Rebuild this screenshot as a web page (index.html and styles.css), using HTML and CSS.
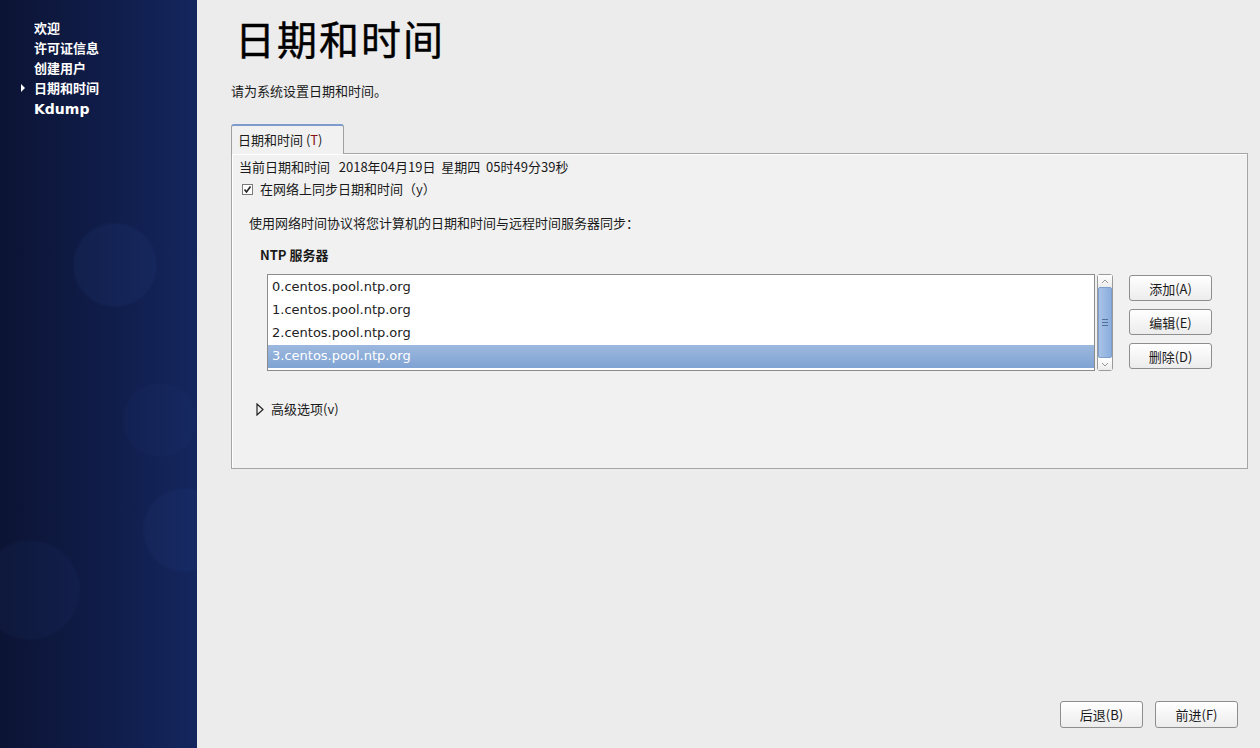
FILE: index.html
```
<!DOCTYPE html>
<html lang="zh-CN">
<head>
  <meta charset="UTF-8">
  <title>日期和时间</title>
  <link rel="stylesheet" href="styles.css">
</head>
<body>
  <!-- 左侧步骤 -->
  <div class="sidebar">
    <div class="step">欢迎</div>
    <div class="step">许可证信息</div>
    <div class="step">创建用户</div>
    <div class="step active">日期和时间</div>
    <div class="step kdump">Kdump</div>
  </div>
  <!-- 主区域 -->
  <div class="main">
    <h1 class="page-title">日期和时间</h1>
    <div class="page-desc">请为系统设置日期和时间。</div>
    <div class="tabs">
      <div class="tab">日期和时间 (<span class="red">T</span>)</div>
    </div>
    <div class="panel">
      <div class="line">当前日期和时间&nbsp;&nbsp;&nbsp;2018年04月19日&nbsp;&nbsp;星期四&nbsp;&nbsp;05时49分39秒</div>
      <div class="line check-line">
        <span class="checkbox">
          <svg width="11" height="11" viewBox="0 0 11 11"><path d="M2.5 5.5 L4.5 8 L8.5 2.5" fill="none" stroke="#222" stroke-width="1.6"/></svg>
        </span>
        在网络上同步日期和时间（y）
      </div>
      <div class="line intro">使用网络时间协议将您计算机的日期和时间与远程时间服务器同步：</div>
      <div class="line ntp-title">NTP 服务器</div>
      <div class="ntp-row">
        <div class="server-list">
          <div class="server">0.centos.pool.ntp.org</div>
          <div class="server">1.centos.pool.ntp.org</div>
          <div class="server">2.centos.pool.ntp.org</div>
          <div class="server selected">3.centos.pool.ntp.org</div>
        </div>
        <div class="scrollbar">
          <div class="arrow">
            <svg width="8" height="5" viewBox="0 0 8 5"><path d="M1 4 L4 1 L7 4" fill="none" stroke="#999" stroke-width="1"/></svg>
          </div>
          <div class="thumb"><span></span><span></span><span></span></div>
          <div class="arrow">
            <svg width="8" height="5" viewBox="0 0 8 5"><path d="M1 1 L4 4 L7 1" fill="none" stroke="#999" stroke-width="1"/></svg>
          </div>
        </div>
        <div class="side-buttons">
          <button class="btn">添加(A)</button>
          <button class="btn">编辑(E)</button>
          <button class="btn">删除(D)</button>
        </div>
      </div>
      <div class="line advanced">
        <svg width="8" height="13" viewBox="0 0 8 13"><path d="M1 1 L7 6.5 L1 12 Z" fill="none" stroke="#222" stroke-width="1.2"/></svg>
        <span>高级选项(v)</span>
      </div>
    </div>
    <div class="footer">
      <button class="btn">后退(B)</button>
      <button class="btn">前进(F)</button>
    </div>
  </div>
</body>
</html>
```

FILE: styles.css
```
body {
  margin: 0;
  padding: 0;
  display: flex;
  height: 748px;
  overflow: hidden;
  font-family: "Noto Sans CJK SC", "DejaVu Sans", sans-serif;
  font-size: 13px;
  color: #1a1a1a;
}
.sidebar {
  width: 197px;
  flex-shrink: 0;
  padding-top: 18px;
  box-sizing: border-box;
  background:
    radial-gradient(circle at 115px 265px, rgba(45, 75, 150, 0.12) 0, rgba(45, 75, 150, 0.12) 40px, transparent 43px),
    radial-gradient(circle at 30px 590px, rgba(45, 75, 150, 0.08) 0, rgba(45, 75, 150, 0.08) 48px, transparent 51px),
    radial-gradient(circle at 185px 530px, rgba(45, 75, 150, 0.1) 0, rgba(45, 75, 150, 0.1) 40px, transparent 43px),
    radial-gradient(circle at 160px 420px, rgba(45, 75, 150, 0.06) 0, rgba(45, 75, 150, 0.06) 35px, transparent 38px),
    linear-gradient(to right, #0c1434 0%, #101d4a 55%, #14265e 100%);
}
.step {
  position: relative;
  padding-left: 34px;
  height: 20px;
  line-height: 20px;
  color: #fff;
  font-weight: bold;
  font-size: 13px;
}
.step.kdump {
  font-family: "DejaVu Sans", sans-serif;
  font-size: 14px;
  margin-top: 1px;
}
.step.active::before {
  content: "";
  position: absolute;
  left: 21px;
  top: 6px;
  border-left: 4px solid #fff;
  border-top: 4px solid transparent;
  border-bottom: 4px solid transparent;
}
.main {
  flex: 1;
  display: flex;
  flex-direction: column;
  background: #ececec;
  padding: 0 12px 20px 34px;
}
.page-title {
  margin: 14px 0 0 4px;
  font-size: 40px;
  line-height: 48px;
  font-weight: normal;
  color: #000;
  letter-spacing: 2px;
  -webkit-text-stroke: 0.4px #000;
}
.page-desc {
  margin-top: 20px;
  line-height: 18px;
}
.tabs {
  display: flex;
  margin-top: 23px;
}
.tab {
  height: 30px;
  line-height: 28px;
  padding: 0 6px;
  white-space: nowrap;
  background: #f1f1f1;
  border: 1px solid #a0a0a0;
  border-top: 2px solid #7d9ccd;
  border-bottom: none;
  border-radius: 3px 3px 0 0;
  position: relative;
  top: 1px;
  box-sizing: border-box;
  width: 113px;
}
.red {
  color: #8a1010;
}
.panel {
  height: 316px;
  box-sizing: border-box;
  background: #f1f1f1;
  border: 1px solid #a5a5a5;
  box-shadow: inset 1px 1px 0 #fff;
  padding: 4px 35px 0 7px;
}
.line {
  line-height: 18px;
  height: 18px;
}
.check-line {
  margin-top: 4px;
  display: flex;
  align-items: center;
  gap: 7px;
  padding-left: 3px;
}
.checkbox {
  width: 11px;
  height: 11px;
  border: 1px solid #7a7a7a;
  background: #fff;
  display: flex;
  box-sizing: border-box;
}
.checkbox svg {
  margin: -1px;
}
.intro {
  margin-top: 16px;
  padding-left: 10px;
}
.ntp-title {
  margin-top: 14px;
  padding-left: 21px;
  font-weight: bold;
}
.ntp-row {
  display: flex;
  margin-top: 10px;
  padding-left: 28px;
}
.server-list {
  flex: 1;
  height: 97px;
  box-sizing: border-box;
  border: 1px solid #8c8c8c;
  background: #fff;
  padding-top: 1px;
}
.server {
  height: 23px;
  line-height: 22px;
  padding-left: 4px;
  font-family: "DejaVu Sans", sans-serif;
  font-size: 13px;
  color: #222;
}
.server.selected {
  background: linear-gradient(#9cb8de, #7fa3d3);
  color: #fff;
}
.scrollbar {
  width: 16px;
  height: 97px;
  margin-left: 2px;
  box-sizing: border-box;
  border: 1px solid #9a9a9a;
  border-radius: 3px;
  background: #e9e9e9;
  display: flex;
  flex-direction: column;
}
.arrow {
  height: 12px;
  display: flex;
  align-items: center;
  justify-content: center;
  background: linear-gradient(#fff, #ececec);
}
.thumb {
  flex: 1;
  background: linear-gradient(to right, #a9c2e6, #8aaede);
  border: 1px solid #7d9fcf;
  border-radius: 2px;
  display: flex;
  flex-direction: column;
  align-items: center;
  justify-content: center;
  gap: 2px;
}
.thumb span {
  width: 6px;
  height: 1px;
  background: #4f6f9f;
}
.side-buttons {
  display: flex;
  flex-direction: column;
  gap: 8px;
  margin-left: 16px;
  padding-top: 1px;
}
.btn {
  width: 83px;
  height: 26px;
  border: 1px solid #8e8e8e;
  border-radius: 3px;
  background: linear-gradient(#ffffff, #ececec);
  font-family: "Noto Sans CJK SC", "DejaVu Sans", sans-serif;
  font-size: 13px;
  color: #1a1a1a;
  padding: 0;
  cursor: pointer;
}
.advanced {
  margin-top: 29px;
  padding-left: 17px;
  display: flex;
  align-items: center;
  gap: 7px;
}
.footer {
  margin-top: auto;
  margin-right: 10px;
  display: flex;
  justify-content: flex-end;
  gap: 12px;
}
.footer .btn {
  height: 27px;
}
```
